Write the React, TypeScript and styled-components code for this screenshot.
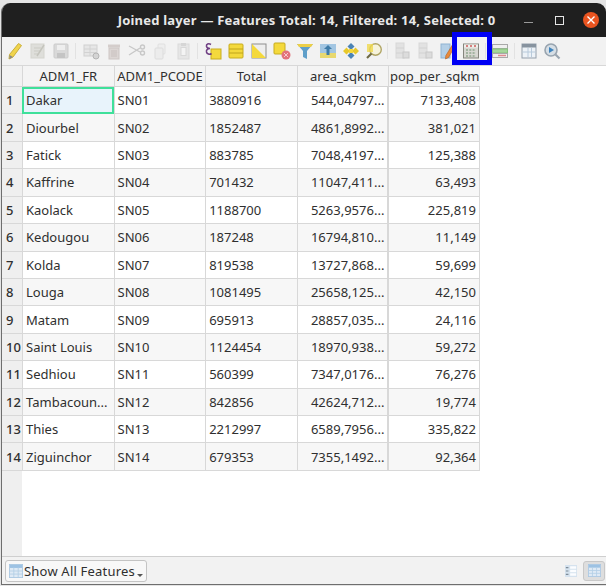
import React from "react";
import styled, { createGlobalStyle } from "styled-components";

const rows = [
  ["Dakar", "SN01", "3880916", "544,04797...", "7133,408"],
  ["Diourbel", "SN02", "1852487", "4861,8992...", "381,021"],
  ["Fatick", "SN03", "883785", "7048,4197...", "125,388"],
  ["Kaffrine", "SN04", "701432", "11047,411...", "63,493"],
  ["Kaolack", "SN05", "1188700", "5263,9576...", "225,819"],
  ["Kedougou", "SN06", "187248", "16794,810...", "11,149"],
  ["Kolda", "SN07", "819538", "13727,868...", "59,699"],
  ["Louga", "SN08", "1081495", "25658,125...", "42,150"],
  ["Matam", "SN09", "695913", "28857,035...", "24,116"],
  ["Saint Louis", "SN10", "1124454", "18970,938...", "59,272"],
  ["Sedhiou", "SN11", "560399", "7347,0176...", "76,276"],
  ["Tambacoun...", "SN12", "842856", "42624,712...", "19,774"],
  ["Thies", "SN13", "2212997", "6589,7956...", "335,822"],
  ["Ziguinchor", "SN14", "679353", "7355,1492...", "92,364"],
];

const headers = ["ADM1_FR", "ADM1_PCODE", "Total", "area_sqkm", "pop_per_sqkm"];

const Pencil = () => (
  <svg width="18" height="18" viewBox="0 0 18 18">
    <path d="M12.5 1.5l3 2L7 15l-4 2 .5-4.5z" fill="#f0d44c" stroke="#c9ae3a" />
    <path d="M3.5 13l3.500 2-3.500 2z" fill="#8a8a8a" />
  </svg>
);
const EditPage = () => (
  <svg width="18" height="18" viewBox="0 0 18 18">
    <rect x="2" y="2" width="13" height="14" fill="#dededa" stroke="#d4d4ce" />
    <path d="M5 6h7M5 9h7M5 12h4" stroke="#cbcbc4" />
    <path d="M15 3L8 14" stroke="#c4c4bc" strokeWidth="1.500" />
  </svg>
);
const Save = () => (
  <svg width="18" height="18" viewBox="0 0 18 18">
    <rect x="2" y="2" width="14" height="14" rx="1" fill="#d9d9d9" stroke="#cbcbcb" />
    <rect x="5" y="3" width="8" height="5" fill="#eeeeee" />
    <rect x="5" y="11" width="8" height="5" fill="#c4c4c4" />
  </svg>
);
const AddFeature = () => (
  <svg width="18" height="18" viewBox="0 0 18 18">
    <rect x="2" y="3" width="13" height="11" fill="#e6e6e6" stroke="#d0d0d0" />
    <path d="M2 7h13M2 10.500h13M8 3v11" stroke="#d2d2d2" />
    <circle cx="14" cy="14" r="3" fill="#d4d4d4" stroke="#b4b4b4" />
  </svg>
);
const Trash = () => (
  <svg width="18" height="18" viewBox="0 0 18 18">
    <rect x="3" y="2.500" width="12" height="3" fill="#d4cdcb" />
    <rect x="4" y="6" width="10" height="11" fill="#dcd6d4" stroke="#cdc6c4" />
    <path d="M7 8v7M9 8v7M11 8v7" stroke="#c8c0be" />
  </svg>
);
const Scissors = () => (
  <svg width="18" height="18" viewBox="0 0 18 18" fill="none" stroke="#c8c8c8" strokeWidth="1.400">
    <path d="M1 4l11 6M1 13l11-7" />
    <circle cx="14.500" cy="5" r="2" />
    <circle cx="14.500" cy="11" r="2" />
  </svg>
);
const Copy = () => (
  <svg width="18" height="18" viewBox="0 0 18 18">
    <rect x="7" y="2" width="7" height="10" rx="1" fill="#eeeeee" stroke="#e0e0e0" />
    <rect x="4" y="6" width="8" height="11" rx="1" fill="#ececec" stroke="#dcdcdc" />
  </svg>
);
const Paste = () => (
  <svg width="18" height="18" viewBox="0 0 18 18">
    <rect x="4" y="2" width="11" height="15" fill="#e6e6e6" stroke="#dadada" />
    <rect x="7" y="5.500" width="5" height="8" fill="#f4f4f4" stroke="#d8d8d8" />
    <rect x="7" y="1" width="5" height="3" fill="#d6d6d6" />
  </svg>
);
const SelectExpr = () => (
  <svg width="20" height="18" viewBox="0 0 20 18">
    <rect x="8" y="7" width="10" height="10" fill="#f4d93c" stroke="#c7ac1e" />
    <path
      d="M8 2.500C5.500 1 3 2 3.500 4.500 4 6 5.500 6.500 7 6.500 5 6.500 3 7.500 3.500 10 4 12 6.500 13 8.500 11.500"
      fill="none"
      stroke="#6f3f83"
      strokeWidth="1.600"
    />
  </svg>
);
const SelectAll = () => (
  <svg width="18" height="18" viewBox="0 0 18 18">
    <rect x="2" y="2" width="14" height="14" rx="1" fill="#f4d93c" stroke="#c7ac1e" />
    <path d="M2 7h14M2 11h14" stroke="#bfa51d" strokeWidth="1.200" />
  </svg>
);
const Invert = () => (
  <svg width="18" height="18" viewBox="0 0 18 18">
    <rect x="2" y="2" width="14" height="14" fill="#eeeeee" stroke="#8e8e8e" />
    <path d="M2 2l14 14H2z" fill="#f4d93c" />
  </svg>
);
const Deselect = () => (
  <svg width="18" height="18" viewBox="0 0 18 18">
    <rect x="1" y="1" width="11" height="11" rx="1" fill="#f4d93c" stroke="#c7ac1e" />
    <circle cx="13" cy="13" r="4.500" fill="#e2737b" />
    <path d="M11 11l4 4M15 11l-4 4" stroke="#f6c9cc" />
  </svg>
);
const Filter = () => (
  <svg width="18" height="18" viewBox="0 0 18 18">
    <path d="M1 2h16l-6 7v8l-4-2V9z" fill="#5f9fc9" />
    <path d="M1 2h16l-2 3H3z" fill="#eccf47" />
  </svg>
);
const MoveTop = () => (
  <svg width="18" height="18" viewBox="0 0 18 18">
    <rect x="1" y="2" width="16" height="14" fill="#a3c6e2" />
    <rect x="1" y="11" width="16" height="5" fill="#e8d86f" />
    <path d="M9 3l4 4h-2.500v6h-3V7H5z" fill="#3f7ca8" />
  </svg>
);
const PanSelected = () => (
  <svg width="18" height="18" viewBox="0 0 18 18">
    <path d="M9 1l3.500 3.500L9 8 5.500 4.500z" fill="#4b83b5" />
    <path d="M9 10l3.500 3.500L9 17l-3.500-3.500z" fill="#4b83b5" />
    <path d="M4.500 5.500L8 9l-3.500 3.500L1 9zM13.500 5.500L17 9l-3.500 3.500L10 9z" fill="#e8c92c" />
    <rect x="7" y="7" width="4" height="4" fill="#f4d93c" />
  </svg>
);
const ZoomSelected = () => (
  <svg width="18" height="18" viewBox="0 0 18 18">
    <circle cx="10.500" cy="7.500" r="5.800" fill="#f6f3dc" stroke="#b0a565" strokeWidth="1.400" />
    <rect x="2" y="2" width="6" height="8" fill="#efd84e" opacity="0.800" />
    <path d="M6.500 11.500L2 16" stroke="#6f6a45" strokeWidth="2.200" />
  </svg>
);
const PasteField = () => (
  <svg width="18" height="18" viewBox="0 0 18 18">
    <rect x="3" y="1" width="8" height="15" fill="#e2e2e2" stroke="#d8d8d8" />
    <path d="M3 6h8M3 11h8" stroke="#d2d2d2" />
    <rect x="10" y="10" width="6" height="6" fill="#dcdcdc" stroke="#c8c8c8" />
  </svg>
);
const EditTable = () => (
  <svg width="18" height="18" viewBox="0 0 18 18">
    <rect x="2" y="2" width="9" height="14" fill="#b4cfe6" stroke="#8fb3d2" />
    <path d="M14.500 1l2.500 1.800L9.500 15.500 6.500 17l.3-3.300z" fill="#e98a3a" stroke="#b75f1f" strokeWidth="0.600" />
  </svg>
);
const FieldCalc = () => (
  <svg width="18" height="18" viewBox="0 0 18 18">
    <rect x="1.500" y="2" width="15" height="14" fill="#d8d8d2" stroke="#85857d" />
    <rect x="2" y="2.500" width="14" height="3" fill="#f0f0ec" />
    <path d="M4 4h2M8 4h2M12 4h2" stroke="#cc5a5a" strokeWidth="1.500" />
    <path d="M4 8h10M4 11h10M4 14h10" stroke="#6f8f6f" strokeDasharray="2 1.300" />
  </svg>
);
const Conditional = () => (
  <svg width="18" height="18" viewBox="0 0 18 18">
    <rect x="1.500" y="2.500" width="15" height="4" fill="#efefef" stroke="#a8a8a8" />
    <rect x="1.500" y="7" width="15" height="4" fill="#a5d69b" stroke="#86c07c" />
    <rect x="1.500" y="11.500" width="15" height="4" fill="#efefef" stroke="#a8a8a8" />
    <path d="M7 13.500h8" stroke="#e08a90" strokeWidth="1.500" />
  </svg>
);
const Dock = () => (
  <svg width="18" height="18" viewBox="0 0 18 18">
    <rect x="2" y="2" width="14" height="14" fill="#edf2f7" stroke="#949fab" />
    <rect x="2" y="2" width="14" height="3.500" fill="#87939f" />
    <path d="M8 6v9M11.500 6v9M2.500 10h13" stroke="#b8cadb" />
  </svg>
);
const Actions = () => (
  <svg width="18" height="18" viewBox="0 0 18 18">
    <circle cx="8" cy="8" r="6" fill="#d6dee5" stroke="#98a4af" strokeWidth="1.600" />
    <path d="M6 5l5 3-5 3z" fill="#3f84bd" />
    <path d="M12.500 12.500l4 4" stroke="#98a4af" strokeWidth="2.200" />
  </svg>
);
const TableIcon = ({ size }: { size: number }) => (
  <svg width={size} height={size} viewBox="0 0 16 16">
    <rect x="0.500" y="0.500" width="15" height="15" fill="#dfeaf5" stroke="#a9c7e2" />
    <rect x="1" y="1" width="14" height="3.500" fill="#9dc2e3" />
    <path d="M1 8h14M1 11.500h14M5.500 4v11M10.500 4v11" stroke="#b4cfe6" />
  </svg>
);
const FormIcon = () => (
  <svg width="12" height="12" viewBox="0 0 14 14">
    <rect x="0" y="0" width="14" height="14" fill="#d5e2ee" />
    <path d="M1 3h3M1 7h3M1 11h3" stroke="#7d8b98" strokeWidth="1.400" />
    <path d="M6 1.500h7v3H6zM6 5.500h7v3H6zM6 9.500h7v3H6z" fill="#fbfdff" />
  </svg>
);

type ToolItem = React.FC | number;

// numbers are separators, the value is the width they take up
const tools: ToolItem[] = [
  Pencil, EditPage, Save, 7, AddFeature, Trash, Scissors, Copy, Paste, 7,
  SelectExpr, SelectAll, Invert, Deselect, Filter, MoveTop, PanSelected, ZoomSelected, 5,
  PasteField, PasteField, EditTable, FieldCalc, 6, Conditional, 6, Dock, Actions,
];

export default function App() {
  return (
    <Page>
      <GlobalStyle />
      <Window>
        <TitleBar>
          <span />
          <Title>Joined layer — Features Total: 14, Filtered: 14, Selected: 0</Title>
          <Controls>
            <Minimize />
            <Maximize />
            <Close>
              <svg width="10" height="10" viewBox="0 0 10 10">
                <path d="M1.500 1.500l7 7M8.500 1.500l-7 7" stroke="#fff" strokeWidth="1.400" />
              </svg>
            </Close>
          </Controls>
        </TitleBar>
        <Toolbar>
          {tools.map((Tool, i) =>
            typeof Tool === "number" ? (
              <Separator key={i} $space={Tool} />
            ) : (
              <ToolButton key={i}>
                <Tool />
              </ToolButton>
            )
          )}
          <Highlight />
        </Toolbar>
        <TableArea>
          <Corner />
          {headers.map((h) => (
            <HeaderCell key={h}>
              <span>{h}</span>
            </HeaderCell>
          ))}
          {rows.map((row, i) => (
            <React.Fragment key={row[1]}>
              <RowNumber>{i + 1}</RowNumber>
              {row.map((value, j) => (
                <Cell
                  key={j}
                  $alt={i % 2 === 1}
                  $right={j > 2}
                  $current={i === 0 && j === 0}
                >
                  {value}
                </Cell>
              ))}
            </React.Fragment>
          ))}
        </TableArea>
        <Footer>
          <FilterButton>
            <TableIcon size={14} />
            <span>Show All Features</span>
            <Caret />
          </FilterButton>
          <ViewSwitch>
            <FormIcon />
            <ViewButton>
              <TableIcon size={13} />
            </ViewButton>
          </ViewSwitch>
        </Footer>
      </Window>
    </Page>
  );
}

const GlobalStyle = createGlobalStyle`
  html, body {
    margin: 0;
    padding: 0;
    background: #e4e4e4;
  }
`;

const Page = styled.div`
  width: 606px;
  height: 586px;
  padding: 3px 0 2px 1px;
  box-sizing: border-box;
  overflow: hidden;
  font-family: "Noto Sans", sans-serif;
  color: #2f2f2f;
`;

const Window = styled.div`
  height: 100%;
  display: flex;
  flex-direction: column;
  border-left: 1px solid #6e6e6e;
  border-bottom: 1px solid #6e6e6e;
  border-radius: 9px 9px 0 0;
  background: #f2f2f2;
  overflow: hidden;
`;

const TitleBar = styled.div`
  height: 34px;
  flex: none;
  display: grid;
  grid-template-columns: 1fr auto 1fr;
  align-items: center;
  padding-left: 5px;
  background: #1f1f1f;
`;

const Title = styled.div`
  font-size: 13px;
  font-weight: 700;
  letter-spacing: 0.2px;
  color: #e8e8e8;
  white-space: nowrap;
`;

const Controls = styled.div`
  display: grid;
  grid-template-columns: repeat(3, 31px);
  align-items: center;
  justify-items: center;
  justify-self: end;
`;

const Minimize = styled.div`
  width: 9px;
  height: 1px;
  margin-top: 4px;
  background: #9a9a9a;
`;

const Maximize = styled.div`
  width: 7px;
  height: 7px;
  border: 1px solid #e6e6e6;
`;

const Close = styled.div`
  width: 16px;
  height: 16px;
  display: flex;
  align-items: center;
  justify-content: center;
  border-radius: 50%;
  background: #e95420;
`;

const Toolbar = styled.div`
  position: relative;
  height: 28px;
  flex: none;
  display: flex;
  align-items: center;
  padding-left: 1px;
  background: #f2f2f2;
`;

const ToolButton = styled.div`
  width: 23px;
  height: 23px;
  flex: none;
  display: flex;
  align-items: center;
  justify-content: center;
`;

const Separator = styled.div<{ $space: number }>`
  width: 1px;
  height: 16px;
  margin: 0 ${(p) => (p.$space - 1) / 2}px;
  flex: none;
  background: #e2e2e2;
`;

const Highlight = styled.div`
  position: absolute;
  left: 450px;
  top: -5px;
  width: 40px;
  height: 33px;
  box-sizing: border-box;
  border: 5px solid #0000f4;
`;

const TableArea = styled.div`
  flex: 1;
  min-height: 0;
  display: grid;
  grid-template-columns: 20px repeat(5, 91.6px) 1fr;
  grid-template-rows: 21px repeat(14, 27.43px) 1fr;
  border-top: 1px solid #d8d8d8;
  background:
    linear-gradient(#efefef, #efefef) left / 20px 100% no-repeat,
    #ffffff;
  font-size: 13px;
`;

const Corner = styled.div`
  background: #f2f2f2;
  border-bottom: 1px solid #d4d4d4;
`;

const HeaderCell = styled.div`
  display: flex;
  align-items: center;
  justify-content: center;
  overflow: hidden;
  white-space: nowrap;
  background: #f4f4f4;
  border-left: 1px solid #d8d8d8;
  border-bottom: 1px solid #d4d4d4;

  & > span {
    flex: none;
  }
`;

const RowNumber = styled.div`
  grid-column: 1;
  display: flex;
  align-items: center;
  padding-left: 4px;
  background: #efefef;
  border-bottom: 1px solid #d8d8d8;
  font-weight: 500;
`;

const Cell = styled.div<{ $alt: boolean; $right: boolean; $current: boolean }>`
  display: flex;
  align-items: center;
  justify-content: ${(p) => (p.$right ? "flex-end" : "flex-start")};
  box-sizing: border-box;
  padding: 0 3px;
  white-space: nowrap;
  overflow: hidden;
  background: ${(p) => (p.$current ? "#e8f3fb" : p.$alt ? "#f7f7f7" : "#ffffff")};
  border-left: 1px solid #d8d8d8;
  border-right: ${(p) => (p.$right ? "1px solid #d8d8d8" : "none")};
  border-bottom: 1px solid #d8d8d8;
  outline: ${(p) => (p.$current ? "2px solid #3fe09a" : "none")};
  outline-offset: -2px;
`;

const Footer = styled.div`
  height: 28px;
  flex: none;
  display: flex;
  align-items: center;
  justify-content: space-between;
  padding: 0 0 0 3px;
  box-sizing: border-box;
  background: #f2f2f2;
  border-top: 1px solid #cfcfcf;
`;

const FilterButton = styled.div`
  width: 142px;
  height: 22px;
  box-sizing: border-box;
  display: flex;
  align-items: center;
  gap: 1px;
  padding-left: 3px;
  position: relative;
  border: 1px solid #c4c4c4;
  border-radius: 3px;
  background: #f8f8f8;
  font-size: 13px;
  letter-spacing: 0.2px;
  white-space: nowrap;
`;

const Caret = styled.div`
  position: absolute;
  right: 3px;
  bottom: 4px;
  width: 0;
  height: 0;
  border-left: 3px solid transparent;
  border-right: 3px solid transparent;
  border-top: 3px solid #555;
`;

const ViewSwitch = styled.div`
  display: flex;
  align-items: center;
  gap: 6px;
  padding-right: 1px;
`;

const ViewButton = styled.div`
  width: 22px;
  height: 20px;
  display: flex;
  align-items: center;
  justify-content: center;
  border: 1px solid #c8c8c8;
  border-radius: 3px;
  background: #dedede;
  box-sizing: border-box;
`;
